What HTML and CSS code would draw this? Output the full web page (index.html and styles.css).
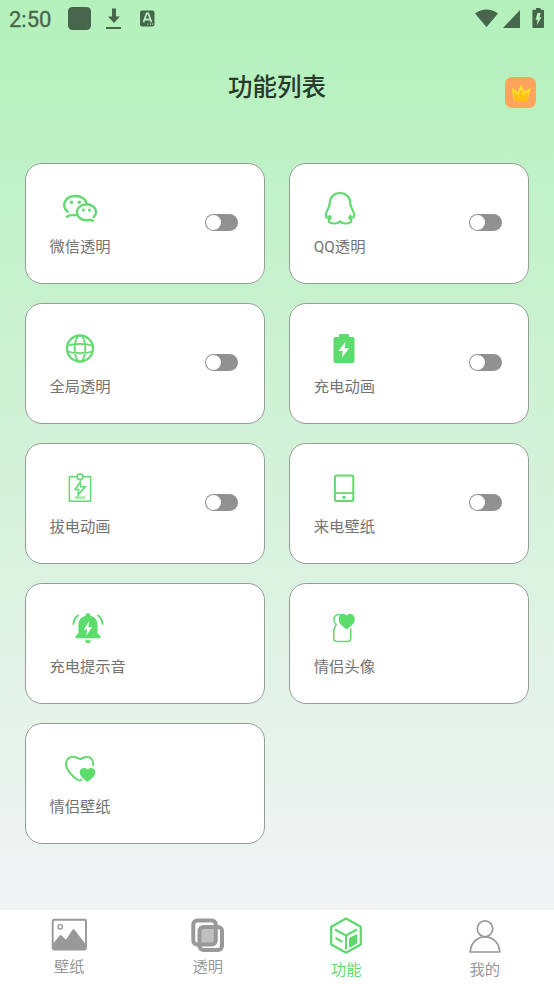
FILE: index.html
```html
<!DOCTYPE html>
<html lang="zh-CN">
<head>
<meta charset="utf-8">
<title>功能列表</title>
<link rel="stylesheet" href="styles.css">
</head>
<body>
<div class="app">
  <header class="status">
    <span class="clock">2:50</span>
    <svg class="status-left" width="90" height="24" viewBox="0 0 90 24">
      <rect x="0" y="0" width="23" height="23" rx="4.5"/>
      <path d="M44 1.5h4v8h4l-6 6.500-6-6.500h4zM38 20h15v2H38z"/>
      <rect x="72" y="3.500" width="14.500" height="16" rx="2"/>
      <path class="cut" d="M75.500 15.300l3.200-9h1.600l3.200 9M76.500 12.500h6"/>
      <path class="dots" d="M79.500 17.200h1M82 17.200h1M84.300 17.200h1"/>
    </svg>
    <svg class="status-right" width="70" height="22" viewBox="0 0 70 22">
      <path d="M0 5.500C7 .2 16 .2 23 5.500L11.500 19zM28 20L45 2v18z"/>
      <path d="M61 0h4.500v1.800H68c.7 0 1 .4 1 1V19c0 .6-.3 1-1 1h-9.500c-.7 0-1.100-.4-1.100-1V2.800c0-.6.4-1 1.100-1H61z"/>
      <path class="bolt" d="M62.500 5h3.200l-1.200 4.200h2L61.800 17l.8-5.300h-2.100z"/>
    </svg>
  </header>

  <div class="titlebar">
    <h1>功能列表</h1>
    <div class="vip">
      <svg width="20" height="18" viewBox="0 0 20 18">
        <path d="M.5 3.500L6.500 8 10 .5 13.500 8l6-4.500L16.700 17H3.300z" fill="#ffe02c"/>
        <path d="M2.500 7.500l5 4L10 5l2.500 6.500 5-4L16.600 17H3.400z" fill="#ffbf18"/>
      </svg>
    </div>
  </div>

  <main class="grid">
    <section class="card">
      <div class="item">
        <svg class="icon" viewBox="0 0 40 40">
          <path stroke-width="2.400" d="M7.700 22.700C.5 16.500 5.300 7 15.300 7c5.800 0 10.300 3 11.300 7.600M6.800 27.800c2-2.100 4.300-1.700 8.400-1.600M33 31.800c-1.500-1.600-3.700-.6-6.200-.6-5.600 0-9.900-3.400-9.900-7.900 0-4.600 4.200-8 9.600-8s9.500 3.300 9.500 7.800c0 2-.7 3.600-2.400 5.200"/>
          <g class="solid"><circle cx="11.500" cy="13.200" r="1.700"/><circle cx="19.300" cy="13.200" r="1.700"/><circle cx="23.300" cy="21" r="1.500"/><circle cx="29.500" cy="21" r="1.500"/></g>
        </svg>
        <span>微信透明</span>
      </div>
      <i class="switch"></i>
    </section>
    <section class="card">
      <div class="item">
        <svg class="icon" viewBox="0 0 40 40">
          <path stroke-width="2.200" stroke-linejoin="round" d="M20 4C13.500 4 9.700 8.500 9.700 14.800c0 3.500-3.800 7-3.800 11.200 0 1.800.5 2.600 1.500 2.600.8 0 1.700-.8 2.400-1.600l1 2c-1.500.6-2.100 1.400-2.100 2.500 0 2 2.500 3 6 3 2.700 0 4-.9 5.300-2.300 1.300 1.400 2.600 2.300 5.300 2.300 3.500 0 6-1 6-3 0-1.100-.6-1.900-2.100-2.500l1-2c.7.8 1.600 1.600 2.400 1.600 1 0 1.500-.8 1.500-2.600 0-4.200-3.800-7.700-3.800-11.200C30.300 8.500 26.500 4 20 4z"/>
        </svg>
        <span>QQ透明</span>
      </div>
      <i class="switch"></i>
    </section>
    <section class="card">
      <div class="item">
        <svg class="icon" viewBox="0 0 40 40">
          <circle cx="20" cy="19.500" r="13" stroke-width="2.300"/>
          <path stroke-width="1.800" d="M17.800 7c-4.200 7-4.200 18 0 25M22.200 7c4.200 7 4.200 18 0 25M7.500 16.500c6.500-2.200 18.500-2.200 25 0M7.500 22.500c6.500 2.200 18.500 2.200 25 0"/>
        </svg>
        <span>全局透明</span>
      </div>
      <i class="switch"></i>
    </section>
    <section class="card">
      <div class="item">
        <svg class="icon" viewBox="0 0 40 40">
          <path class="solid" d="M16 5h8q1 0 1 1v2h3.500q2 0 2 2v22q0 2-2 2h-17q-2 0-2-2V10q0-2 2-2H15V6q0-1 1-1z"/>
          <path fill="#fff" stroke="none" d="M21.500 12.800L14.400 22h4.400l-1 6.500 7.500-9.200h-4.700z"/>
        </svg>
        <span>充电动画</span>
      </div>
      <i class="switch"></i>
    </section>
    <section class="card">
      <div class="item">
        <svg class="icon" viewBox="0 0 40 40">
          <path stroke-width="1.500" d="M17 7.800H9.400v24.500h21.200V7.800H23"/>
          <circle cx="20" cy="7.700" r="2.900" stroke-width="1.600"/>
          <path stroke-width="1.600" d="M20.300 13l-5.200 7.500h3.600l-.7 5.500 7.200-8.200h-4.400z"/>
          <path stroke-width="2" opacity=".7" d="M15.500 28.500h9"/>
        </svg>
        <span>拔电动画</span>
      </div>
      <i class="switch"></i>
    </section>
    <section class="card">
      <div class="item">
        <svg class="icon" viewBox="0 0 40 40">
          <rect x="10.900" y="6.500" width="18.400" height="25.500" rx="1.800" stroke-width="2"/>
          <path stroke-width="1.700" d="M11 24.200h18"/>
          <circle class="solid" cx="20" cy="28.200" r="1.700"/>
        </svg>
        <span>来电壁纸</span>
      </div>
      <i class="switch"></i>
    </section>
    <section class="card">
      <div class="item">
        <svg class="icon" viewBox="0 0 40 40">
          <path class="solid" d="M17.800 5.500q0-1.300 2.200-1.300t2.200 1.300v1.300c4.500 1 7.300 4.200 7.300 8.700v8.500l3 3.300v1.900H7.500v-1.900l3-3.300v-8.500c0-4.500 2.800-7.700 7.300-8.700zM17 31.300h6c-.5 4-5.500 4-6 0z"/>
          <path fill="#fff" stroke="none" d="M21.200 12L15.900 20.400h3.200L18.300 26.500l5.700-8.300h-3.700z"/>
          <path stroke-width="2" d="M10 6.500C7.500 8.300 5.800 11.300 5.500 14.800M30 6.500c2.500 1.800 4.200 4.800 4.500 8.300"/>
        </svg>
        <span>充电提示音</span>
      </div>
    </section>
    <section class="card">
      <div class="item">
        <svg class="icon" viewBox="0 0 40 40">
          <path stroke-width="1.500" d="M17.500 6.500c-3.700-2.200-7.700.1-7.700 4 0 2 .8 3.400 2.200 4.500.6 2-2.300 3.400-2.300 7V29.500c0 2 1.200 3 3.200 3H23.500c2 0 3.300-1 3.300-3V20"/>
          <path class="solid" d="M22.700 6.800c1.800-3.200 8-2.300 8 3.200 0 5-3.700 7.200-8 10.300-4.300-3.100-8-5.300-8-10.300 0-5.500 6.200-6.400 8-3.200z"/>
        </svg>
        <span>情侣头像</span>
      </div>
    </section>
    <section class="card">
      <div class="item">
        <svg class="icon" viewBox="0 0 40 40">
          <path stroke-width="2" d="M33 16.200c1-6.500-4-9-7.300-8.300-2.500.5-4.700 2.100-5.700 2.100s-2.500-1.600-5-2.100C8.500 7 4 12.500 6.800 18.800 9 24.500 14 28.200 17.800 31c1 .7 2.300.6 3.400-.1"/>
          <path class="solid" d="M27.500 20.500c1.800-2.800 7.800-2 7.800 2.600 0 4-3.900 7-7.800 10-3.900-3-7.800-6-7.800-10 0-4.600 6-5.400 7.800-2.600z"/>
        </svg>
        <span>情侣壁纸</span>
      </div>
    </section>
  </main>

  <nav class="tabs">
    <a class="tab">
      <svg width="36" height="34" viewBox="0 0 36 34">
        <rect x="1.700" y="1.800" width="33.300" height="29.700" rx="1.500" stroke-width="1.900"/>
        <circle cx="9.200" cy="8.800" r="2.200" stroke-width="1.400"/>
        <path class="solid" d="M2 25.500l6.500-7.800q1.200-1.200 2.400 0l4 4 6.400-9.700q1.200-1.600 2.500 0L34.500 26v5.500H2z"/>
      </svg>
      <span>壁纸</span>
    </a>
    <a class="tab">
      <svg width="36" height="34" viewBox="0 0 36 34">
        <rect x="9" y="8.500" width="17" height="17" fill="#bfbfbf" stroke="none"/>
        <rect x="3.300" y="2.500" width="22.500" height="24" rx="4" stroke-width="4"/>
        <rect x="9.500" y="9" width="22.500" height="23" rx="4" stroke-width="4"/>
      </svg>
      <span>透明</span>
    </a>
    <a class="tab active">
      <svg width="36" height="38" viewBox="0 0 36 38">
        <path stroke-width="2.300" stroke-linejoin="round" d="M18 1.500l14.800 8.200v17.800L18 35.700 3.200 27.500V9.700z"/>
        <path stroke-width="2" d="M7 12.500l11 6 11-6M18 18.500v14M7.500 21l7 3.800"/>
        <path class="solid" d="M21 22q0-1 1-1.500l6-3q1.300-.5 1.300 1v7q0 1-1 1.600l-6 3.400q-1.300.5-1.300-1z"/>
      </svg>
      <span>功能</span>
    </a>
    <a class="tab mine">
      <svg width="36" height="36" viewBox="0 0 36 36">
        <ellipse cx="18" cy="9.800" rx="7.700" ry="8" stroke-width="1.700"/>
        <path stroke-width="1.700" d="M3.300 33h29.400C32.500 24.200 26 17.800 18 17.800S3.500 24.200 3.300 33z"/>
      </svg>
      <span>我的</span>
    </a>
  </nav>
</div>
</body>
</html>
```

FILE: styles.css
```css
* { box-sizing: border-box; }

body {
  margin: 0;
  font-family: Roboto, "Noto Sans CJK SC", sans-serif;
}

.app {
  display: flex;
  flex-direction: column;
  width: 554px;
  height: 984px;
  overflow: hidden;
  background: linear-gradient(#b3f1bb, #f2f3f6 910px);
}

svg { display: block; }

.status {
  display: flex;
  height: 38px;
  padding: 7px 9px 0 9px;
  fill: #47664c;
}
.clock {
  width: 59px;
  color: #47664c;
  font-size: 22px;
  line-height: 25px;
  -webkit-text-stroke: 0.3px #47664c;
}
.cut { fill: none; stroke: #b5f1bd; stroke-width: 1.8; }
.dots { stroke: #b5f1bd; stroke-width: 1.3; }
.status-right { margin: 1px 0 0 auto; }
.bolt { fill: #b5f1bd; }

.titlebar {
  display: grid;
  grid-template-columns: 1fr auto 1fr;
  height: 125px;
  padding-right: 18px;
  padding-left: 18px;
}
h1 {
  grid-column: 2;
  margin: 32px 0 0;
  color: #283a2b;
  font-size: 24.5px;
  font-weight: 500;
  line-height: 36px;
}
.vip {
  display: grid;
  place-items: center;
  justify-self: end;
  width: 31px;
  height: 31px;
  margin-top: 39px;
  border-radius: 7px;
  background: #ffa45c;
}

.grid {
  display: grid;
  flex: 1;
  grid-template-columns: 240px 240px;
  grid-auto-rows: 121px;
  gap: 19px 24.4px;
  align-content: start;
  padding-left: 25px;
}
.card {
  display: flex;
  justify-content: space-between;
  padding: 25px 26px 0 23.4px;
  border: 1px solid #969d98;
  border-radius: 17px;
  background: #fff;
}
.item {
  display: flex;
  flex-direction: column;
  align-items: center;
  height: 72px;
  color: #737373;
  font-size: 15.3px;
  line-height: 22px;
}
.icon {
  width: 40px;
  height: 40px;
  margin-bottom: 7px;
  fill: none;
  stroke: #63da70;
  stroke-linecap: round;
}
.icon .solid { fill: #5cdc6c; stroke: none; }

.switch {
  width: 33px;
  height: 17px;
  margin-top: 25px;
  padding: 1px;
  border-radius: 9px;
  background: #919191;
}
.switch::before {
  display: block;
  width: 15px;
  height: 15px;
  border-radius: 50%;
  background: #fff;
  content: "";
}

.tabs {
  display: grid;
  grid-template-columns: repeat(4, 1fr);
  height: 74px;
  background: #fff;
}
.tab {
  display: flex;
  flex-direction: column;
  align-items: center;
  gap: 4px;
  padding-top: 8px;
  color: #999;
  font-size: 15.3px;
  line-height: 22px;
}
.tab svg { fill: none; stroke: #999; }
.tab .solid { fill: #999; stroke: none; }
.tab.active { gap: 4px; padding-top: 7px; color: #5fd96f; }
.tab.active svg { stroke: #5fd96f; }
.tab.active .solid { fill: #5fd96f; }
.tab.mine { gap: 4px; padding-top: 9px; }
```
